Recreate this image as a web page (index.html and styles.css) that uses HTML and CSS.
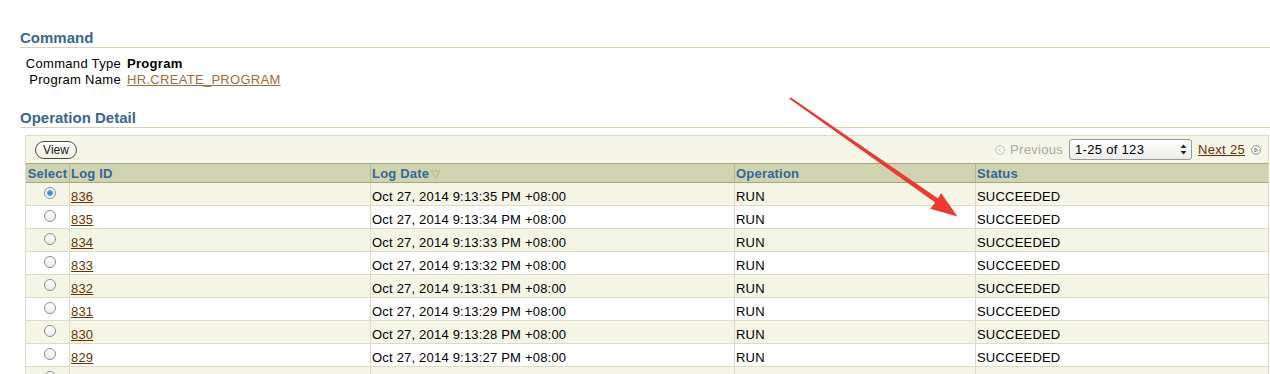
FILE: index.html
```html
<!DOCTYPE html>
<html lang="en">
<head>
    <meta charset="UTF-8">
    <meta name="viewport" content="width=device-width, initial-scale=1.0">
    <title>Job Log Details</title>
    <link rel="stylesheet" href="styles.css">
</head>
<body>
    <div class="page">
        <h2 class="section-title">Command</h2>
        <div class="props">
            <span class="prop-label">Command Type</span>
            <span class="prop-value"><b>Program</b></span>
            <span class="prop-label">Program Name</span>
            <span class="prop-value"><a href="#" class="soft-link">HR.CREATE_PROGRAM</a></span>
        </div>

        <h2 class="section-title">Operation Detail</h2>
        <div class="results">
            <div class="toolbar">
                <button type="button" class="btn">View</button>
                <div class="pager">
                    <span class="pager-prev">
                        <svg class="nav-icon" width="10" height="10" viewBox="0 0 10 10">
                            <circle cx="5" cy="5" r="4.4" fill="#fafaf4" stroke="#bdbdb2" stroke-width="1"/>
                            <path d="M6 3 L3.6 5 L6 7" fill="none" stroke="#cfcfc4" stroke-width="1"/>
                        </svg>
                        Previous
                    </span>
                    <div class="range">
                        <span>1-25 of 123</span>
                        <svg width="7" height="11" viewBox="0 0 7 11">
                            <path d="M3.5 0.5 L6.5 4 L0.5 4 Z" fill="#222"/>
                            <path d="M3.5 10.5 L6.5 7 L0.5 7 Z" fill="#222"/>
                        </svg>
                    </div>
                    <a href="#" class="next-link">Next 25</a>
                    <svg class="nav-icon" width="10" height="10" viewBox="0 0 10 10">
                        <circle cx="5" cy="5" r="4.4" fill="#fff" stroke="#8c8c84" stroke-width="1"/>
                        <path d="M4 3 L6.6 5 L4 7 Z" fill="none" stroke="#6c6c66" stroke-width="0.9"/>
                    </svg>
                </div>
            </div>
            <table class="grid">
                <colgroup>
                    <col style="width: 43px">
                    <col style="width: 301px">
                    <col style="width: 364px">
                    <col style="width: 241px">
                    <col>
                </colgroup>
                <thead>
                    <tr>
                        <th class="center">Select</th>
                        <th>Log ID</th>
                        <th>Log Date<svg class="sort" width="11" height="9" viewBox="0 0 11 9"><path d="M1 1 L10 1 L5.5 8 Z" fill="none" stroke="#b4b87c" stroke-width="1"/></svg></th>
                        <th>Operation</th>
                        <th>Status</th>
                    </tr>
                </thead>
                <tbody>
                    <tr>
                        <td class="center"><input type="radio" name="log" checked></td>
                        <td><a href="#">836</a></td>
                        <td>Oct 27, 2014 9:13:35 PM +08:00</td>
                        <td>RUN</td>
                        <td>SUCCEEDED</td>
                    </tr>
                    <tr>
                        <td class="center"><input type="radio" name="log"></td>
                        <td><a href="#">835</a></td>
                        <td>Oct 27, 2014 9:13:34 PM +08:00</td>
                        <td>RUN</td>
                        <td>SUCCEEDED</td>
                    </tr>
                    <tr>
                        <td class="center"><input type="radio" name="log"></td>
                        <td><a href="#">834</a></td>
                        <td>Oct 27, 2014 9:13:33 PM +08:00</td>
                        <td>RUN</td>
                        <td>SUCCEEDED</td>
                    </tr>
                    <tr>
                        <td class="center"><input type="radio" name="log"></td>
                        <td><a href="#">833</a></td>
                        <td>Oct 27, 2014 9:13:32 PM +08:00</td>
                        <td>RUN</td>
                        <td>SUCCEEDED</td>
                    </tr>
                    <tr>
                        <td class="center"><input type="radio" name="log"></td>
                        <td><a href="#">832</a></td>
                        <td>Oct 27, 2014 9:13:31 PM +08:00</td>
                        <td>RUN</td>
                        <td>SUCCEEDED</td>
                    </tr>
                    <tr>
                        <td class="center"><input type="radio" name="log"></td>
                        <td><a href="#">831</a></td>
                        <td>Oct 27, 2014 9:13:29 PM +08:00</td>
                        <td>RUN</td>
                        <td>SUCCEEDED</td>
                    </tr>
                    <tr>
                        <td class="center"><input type="radio" name="log"></td>
                        <td><a href="#">830</a></td>
                        <td>Oct 27, 2014 9:13:28 PM +08:00</td>
                        <td>RUN</td>
                        <td>SUCCEEDED</td>
                    </tr>
                    <tr>
                        <td class="center"><input type="radio" name="log"></td>
                        <td><a href="#">829</a></td>
                        <td>Oct 27, 2014 9:13:27 PM +08:00</td>
                        <td>RUN</td>
                        <td>SUCCEEDED</td>
                    </tr>
                    <tr>
                        <td class="center"><input type="radio" name="log"></td>
                        <td><a href="#">828</a></td>
                        <td>Oct 27, 2014 9:13:26 PM +08:00</td>
                        <td>RUN</td>
                        <td>SUCCEEDED</td>
                    </tr>
                </tbody>
            </table>
        </div>

        <!-- red annotation arrow drawn over the screenshot -->
        <svg class="annotation" width="1270" height="374" viewBox="0 0 1270 374">
            <polygon points="790.6,97.2 938.1,198.4 941.0,193.0 957.5,216.5 930.2,208.8 935.2,202.6 789.4,98.8" fill="#ec3a32"/>
        </svg>
    </div>
</body>
</html>
```

FILE: styles.css
```css
:root {
    --title-color: #3a6494;
    --header-text: #336699;
    --link-color: #663300;
    --soft-link: #a06c3c;
    --rule-color: #d8d5b6;
    --bar-bg: #f5f5e8;
    --header-bg: #d0d4ae;
    --header-line: #a3a585;
    --row-alt: #f4f5e5;
    --cell-line: #dcdcc6;
}

* {
    margin: 0;
    padding: 0;
    box-sizing: border-box;
}

body {
    font-family: "Liberation Sans", Arial, sans-serif;
    font-size: 13px;
    color: #000;
    background: #fff;
    overflow: hidden;
}

.page {
    position: relative;
    padding-top: 29px;
}

.section-title {
    margin-left: 20px;
    font-size: 15px;
    line-height: 18px;
    font-weight: bold;
    color: var(--title-color);
    border-bottom: 1px solid var(--rule-color);
}

/* Command properties */
.props {
    display: grid;
    grid-template-columns: 96px auto;
    column-gap: 6px;
    justify-content: start;
    margin: 8px 0 21px 25px;
    line-height: 16px;
    letter-spacing: 0.3px;
}

.prop-label {
    text-align: right;
}

.soft-link {
    color: var(--soft-link);
}

/* Results table */
.results {
    margin: 7px 1px 0 25px;
    border: 1px solid var(--cell-line);
    border-bottom: none;
}

.toolbar {
    display: flex;
    align-items: center;
    justify-content: space-between;
    height: 27px;
    padding: 0 7px 0 9px;
    background: var(--bar-bg);
}

.btn {
    height: 18px;
    width: 42px;
    font-family: inherit;
    font-size: 12px;
    color: #222;
    border: 1px solid #4a4a44;
    border-radius: 9px;
    background: linear-gradient(#ffffff, #f0f0e4);
    cursor: pointer;
}

.pager {
    display: flex;
    align-items: center;
    letter-spacing: 0.3px;
}

.pager-prev {
    display: flex;
    align-items: center;
    gap: 5px;
    color: #a9a9a0;
    margin-right: 6px;
}

.range {
    display: flex;
    align-items: center;
    justify-content: space-between;
    width: 123px;
    height: 21px;
    padding: 0 4px 0 5px;
    border: 1px solid #9a9a94;
    border-radius: 3px;
    background: linear-gradient(#ffffff, #ececea);
    margin-right: 6px;
}

.next-link {
    color: var(--link-color);
    margin-right: 6px;
}

.nav-icon {
    display: block;
}

.grid {
    width: 100%;
    table-layout: fixed;
    border-collapse: separate;
    border-spacing: 0;
    letter-spacing: 0.2px;
}

.grid th {
    height: 20px;
    padding: 0 1px;
    text-align: left;
    font-weight: bold;
    color: var(--header-text);
    background: var(--header-bg);
    border-top: 1px solid var(--header-line);
    border-bottom: 1px solid var(--header-line);
    border-left: 1px solid #b3b596;
    white-space: nowrap;
}

.grid th:first-child,
.grid td:first-child {
    border-left: none;
}

.grid td {
    height: 23px;
    padding: 4px 1px 0;
    border-bottom: 1px solid var(--cell-line);
    border-left: 1px solid var(--cell-line);
    vertical-align: middle;
    white-space: nowrap;
}

.grid tbody tr:nth-child(odd) td {
    background: var(--row-alt);
}

.grid .center {
    text-align: center;
    padding: 0;
}

.grid td.center {
    padding: 0 0 2px 5px;
}

.grid a {
    color: var(--link-color);
}

.sort {
    margin-left: 1px;
    vertical-align: -1px;
}

input[type="radio"] {
    appearance: none;
    display: block;
    margin: 0 auto;
    width: 12px;
    height: 12px;
    border: 1px solid #8e8e8a;
    border-radius: 50%;
    background: linear-gradient(#ffffff, #ececea);
}

input[type="radio"]:checked {
    border-color: #7f97b8;
    background: radial-gradient(circle, #3f78cc 0, #5f92d8 2.4px, #dfe8f4 3.2px, #ffffff 5px);
}

.annotation {
    position: absolute;
    top: 0;
    left: 0;
    pointer-events: none;
}
```
